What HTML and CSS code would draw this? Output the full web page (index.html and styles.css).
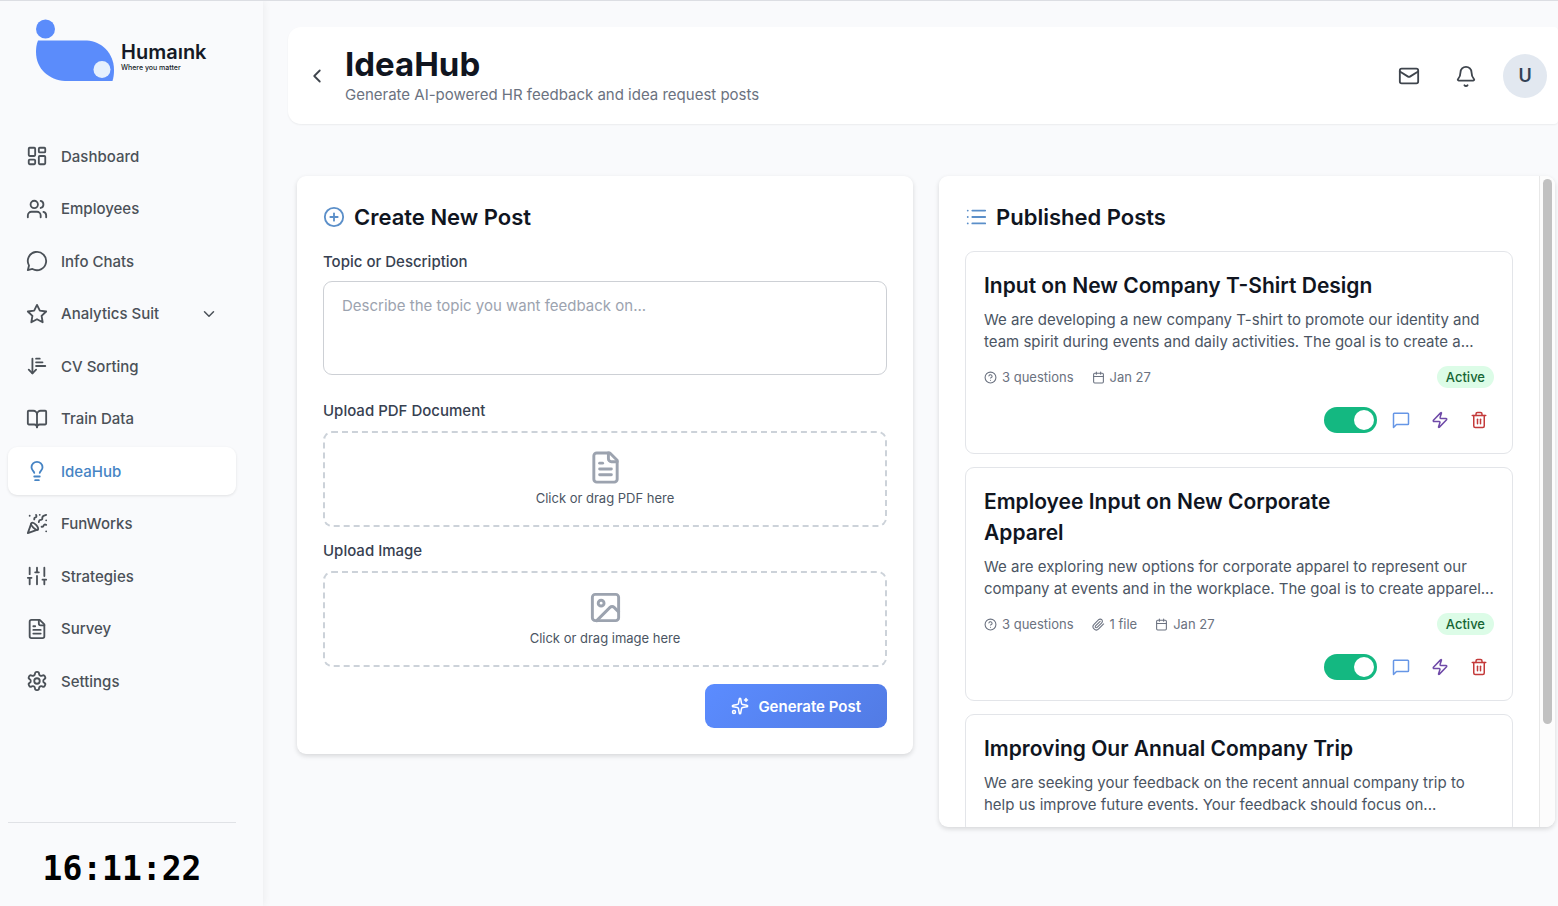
FILE: index.html
```html
<!DOCTYPE html>
<html lang="en">
<head>
<meta charset="UTF-8" />
<meta name="viewport" content="width=device-width, initial-scale=1" />
<title>Humaink - IdeaHub</title>
<link rel="stylesheet" href="styles.css">
</head>
<body>
  <aside class="sidebar">
    <a href="#" class="logo" aria-label="Humaink home">
      <svg class="logo-mark" viewBox="0 0 80 64">
        <circle cx="10.500" cy="10" r="9.500" fill="#5b8cfb"/>
        <path d="M3 21.500H52C66 22 79 34 79 51C79 55 78.500 59 77.500 62H30C14 61 1 50 1 33C1 29 1.500 25 3 21.500Z" fill="#5b8cfb"/>
        <circle cx="67" cy="50.500" r="8.500" fill="#e6f0fd"/>
      </svg>
      <span class="logo-text">
        <span class="logo-name">Humaınk</span>
        <span class="logo-tagline">Where you matter</span>
      </span>
    </a>

    <nav class="nav">
      <a href="#" class="nav-item">
        <svg class="icon" viewBox="0 0 24 24"><rect x="3" y="3" width="7" height="9" rx="1"/><rect x="14" y="3" width="7" height="5" rx="1"/><rect x="14" y="12" width="7" height="9" rx="1"/><rect x="3" y="16" width="7" height="5" rx="1"/></svg>
        <span>Dashboard</span>
      </a>
      <a href="#" class="nav-item">
        <svg class="icon" viewBox="0 0 24 24"><path d="M16 21v-2a4 4 0 0 0-4-4H6a4 4 0 0 0-4 4v2"/><circle cx="9" cy="7" r="4"/><path d="M22 21v-2a4 4 0 0 0-3-3.870"/><path d="M16 3.130a4 4 0 0 1 0 7.750"/></svg>
        <span>Employees</span>
      </a>
      <a href="#" class="nav-item">
        <svg class="icon" viewBox="0 0 24 24"><path d="M7 20.700A10 10 0 1 0 3.300 17L2 22Z"/></svg>
        <span>Info Chats</span>
      </a>
      <button type="button" class="nav-item">
        <svg class="icon" viewBox="0 0 24 24"><path d="M12 2l3.090 6.260L22 9.270l-5 4.870 1.180 6.880L12 17.770l-6.180 3.250L7 14.140 2 9.270l6.910-1.010z"/></svg>
        <span>Analytics Suit</span>
        <svg class="icon chevron" viewBox="0 0 24 24"><path d="m6 9 6 6 6-6"/></svg>
      </button>
      <a href="#" class="nav-item">
        <svg class="icon" viewBox="0 0 24 24"><path d="m3 16 4 4 4-4"/><path d="M7 20V4"/><path d="M11 4h4"/><path d="M11 8h7"/><path d="M11 12h10"/></svg>
        <span>CV Sorting</span>
      </a>
      <a href="#" class="nav-item">
        <svg class="icon" viewBox="0 0 24 24"><path d="M12 7v14"/><path d="M3 18a1 1 0 0 1-1-1V4a1 1 0 0 1 1-1h5a4 4 0 0 1 4 4 4 4 0 0 1 4-4h5a1 1 0 0 1 1 1v13a1 1 0 0 1-1 1h-6a3 3 0 0 0-3 3 3 3 0 0 0-3-3z"/></svg>
        <span>Train Data</span>
      </a>
      <a href="#" class="nav-item active" aria-current="page">
        <svg class="icon" viewBox="0 0 24 24"><path d="M15 14c.2-1 .7-1.700 1.500-2.500 1-.9 1.500-2.200 1.500-3.500A6 6 0 0 0 6 8c0 1 .2 2.200 1.500 3.500.7.700 1.300 1.500 1.500 2.500"/><path d="M9 18h6"/><path d="M10 22h4"/></svg>
        <span>IdeaHub</span>
      </a>
      <a href="#" class="nav-item">
        <svg class="icon" viewBox="0 0 24 24"><path d="M5.800 11.300 2 22l10.700-3.790"/><path d="M4 3h.01"/><path d="M22 8h.01"/><path d="M15 2h.01"/><path d="M22 20h.01"/><path d="m22 2-2.240.75a2.900 2.900 0 0 0-1.960 3.120c.1.860-.57 1.630-1.450 1.630h-.38c-.86 0-1.600.6-1.760 1.440L14 10"/><path d="m22 13-.82-.33c-.86-.34-1.820.2-1.980 1.110c-.11.700-.72 1.220-1.430 1.220H17"/><path d="m11 2 .33.820c.34.860-.2 1.820-1.110 1.980C9.520 4.900 9 5.520 9 6.230V7"/><path d="M11 13c1.930 1.930 2.830 4.170 2 5-.83.830-3.070-.07-5-2-1.930-1.930-2.830-4.170-2-5 .83-.83 3.070.07 5 2Z"/></svg>
        <span>FunWorks</span>
      </a>
      <a href="#" class="nav-item">
        <svg class="icon" viewBox="0 0 24 24"><path d="M4 21v-7M4 10V3M12 21v-9M12 8V3M20 21v-5M20 12V3M2 14h4M10 8h4M18 16h4"/></svg>
        <span>Strategies</span>
      </a>
      <a href="#" class="nav-item">
        <svg class="icon" viewBox="0 0 24 24"><path d="M15 2H6a2 2 0 0 0-2 2v16a2 2 0 0 0 2 2h12a2 2 0 0 0 2-2V7Z"/><path d="M14 2v4a2 2 0 0 0 2 2h4"/><path d="M10 9H8"/><path d="M16 13H8"/><path d="M16 17H8"/></svg>
        <span>Survey</span>
      </a>
      <a href="#" class="nav-item">
        <svg class="icon" viewBox="0 0 24 24"><path d="M12.220 2h-.44a2 2 0 0 0-2 2v.18a2 2 0 0 1-1 1.730l-.43.250a2 2 0 0 1-2 0l-.15-.08a2 2 0 0 0-2.730.730l-.22.380a2 2 0 0 0 .73 2.730l.15.100a2 2 0 0 1 1 1.720v.51a2 2 0 0 1-1 1.740l-.15.090a2 2 0 0 0-.73 2.730l.22.380a2 2 0 0 0 2.730.730l.15-.08a2 2 0 0 1 2 0l.43.250a2 2 0 0 1 1 1.730V20a2 2 0 0 0 2 2h.44a2 2 0 0 0 2-2v-.18a2 2 0 0 1 1-1.730l.43-.25a2 2 0 0 1 2 0l.15.080a2 2 0 0 0 2.730-.73l.22-.39a2 2 0 0 0-.73-2.730l-.15-.08a2 2 0 0 1-1-1.740v-.5a2 2 0 0 1 1-1.740l.15-.09a2 2 0 0 0 .73-2.730l-.22-.38a2 2 0 0 0-2.730-.73l-.15.080a2 2 0 0 1-2 0l-.43-.25a2 2 0 0 1-1-1.730V4a2 2 0 0 0-2-2z"/><circle cx="12" cy="12" r="3"/></svg>
        <span>Settings</span>
      </a>
    </nav>

    <div class="clock">16:11:22</div>
  </aside>

  <main class="main">
    <header class="topbar">
      <button type="button" class="icon-btn back" aria-label="Back">
        <svg class="icon" viewBox="0 0 24 24"><path d="m15 18-6-6 6-6"/></svg>
      </button>
      <div class="topbar-title">
        <h1>IdeaHub</h1>
        <p>Generate AI-powered HR feedback and idea request posts</p>
      </div>
      <div class="topbar-actions">
        <button type="button" class="icon-btn" aria-label="Messages">
          <svg class="icon" viewBox="0 0 24 24"><rect x="2" y="4" width="20" height="16" rx="2"/><path d="m22 7-8.970 5.700a1.940 1.940 0 0 1-2.060 0L2 7"/></svg>
        </button>
        <button type="button" class="icon-btn" aria-label="Notifications">
          <svg class="icon" viewBox="0 0 24 24"><path d="M10.300 22a2 2 0 0 0 3.400 0"/><path d="M3.300 15.300A1 1 0 0 0 4 17h16a1 1 0 0 0 .7-1.700C19.400 14 18 12.500 18 8A6 6 0 0 0 6 8c0 4.500-1.400 6-2.700 7.300"/></svg>
        </button>
        <button type="button" class="avatar" aria-label="Account">U</button>
      </div>
    </header>

    <div class="panels">
      <form class="panel create">
        <h2 class="panel-title">
          <svg class="icon" viewBox="0 0 24 24"><circle cx="12" cy="12" r="10"/><path d="M8 12h8"/><path d="M12 8v8"/></svg>
          Create New Post
        </h2>
        <label class="field-label" for="topic">Topic or Description</label>
        <textarea id="topic" class="topic" placeholder="Describe the topic you want feedback on..."></textarea>

        <label class="field-label" for="pdfFile">Upload PDF Document</label>
        <label class="dropzone">
          <input type="file" id="pdfFile" class="file-input" accept="application/pdf" />
          <svg class="icon" viewBox="0 0 24 24"><path d="M15 2H6a2 2 0 0 0-2 2v16a2 2 0 0 0 2 2h12a2 2 0 0 0 2-2V7Z"/><path d="M14 2v4a2 2 0 0 0 2 2h4"/><path d="M10 9H8"/><path d="M16 13H8"/><path d="M16 17H8"/></svg>
          <span>Click or drag PDF here</span>
        </label>

        <label class="field-label" for="imageFile">Upload Image</label>
        <label class="dropzone">
          <input type="file" id="imageFile" class="file-input" accept="image/*" />
          <svg class="icon" viewBox="0 0 24 24"><rect x="3" y="3" width="18" height="18" rx="2"/><circle cx="9" cy="9" r="2"/><path d="m21 15-3.090-3.090a2 2 0 0 0-2.820 0L6 21"/></svg>
          <span>Click or drag image here</span>
        </label>

        <button type="button" class="generate">
          <svg class="icon" viewBox="0 0 24 24"><path d="M11 2.800a1 1 0 0 1 2 0l1 5.600a2 2 0 0 0 1.600 1.600l5.600 1a1 1 0 0 1 0 2l-5.600 1a2 2 0 0 0-1.600 1.600l-1 5.600a1 1 0 0 1-2 0l-1-5.600A2 2 0 0 0 8.400 14l-5.600-1a1 1 0 0 1 0-2l5.600-1A2 2 0 0 0 10 8.400z"/><path d="M20 2v4"/><path d="M22 4h-4"/><circle cx="4" cy="20" r="2"/></svg>
          Generate Post
        </button>
      </form>

      <section class="panel published">
        <div class="posts">
          <h2 class="panel-title">
            <svg class="icon" viewBox="0 0 24 24"><path d="M8 5h14M8 12h14M8 19h14M3 5h.01M3 12h.01M3 19h.01"/></svg>
            Published Posts
          </h2>

          <article class="post">
            <h3>Input on New Company T-Shirt Design</h3>
            <p class="post-text">We are developing a new company T-shirt to promote our identity and team spirit during events and daily activities. The goal is to create a...</p>
            <div class="meta">
              <span class="meta-item"><svg class="icon" viewBox="0 0 24 24"><circle cx="12" cy="12" r="10"/><path d="M9.090 9a3 3 0 0 1 5.830 1c0 2-3 3-3 3"/><path d="M12 17h.01"/></svg>3 questions</span>
              <span class="meta-item"><svg class="icon" viewBox="0 0 24 24"><path d="M8 2v4"/><path d="M16 2v4"/><rect x="3" y="4" width="18" height="18" rx="2"/><path d="M3 10h18"/></svg>Jan 27</span>
              <span class="badge">Active</span>
            </div>
            <div class="actions">
              <input type="checkbox" role="switch" class="toggle" aria-label="Post active" checked />
              <button type="button" class="action comment" aria-label="Responses"><svg class="icon" viewBox="0 0 24 24"><path d="M21 3H3a1 1 0 0 0-1 1v18l4-4h15a1 1 0 0 0 1-1V4a1 1 0 0 0-1-1z"/></svg></button>
              <button type="button" class="action boost" aria-label="Analyze"><svg class="icon" viewBox="0 0 24 24"><path d="M4 14a1 1 0 0 1-.78-1.630l9.900-10.200a.5.500 0 0 1 .86.460l-1.920 6.020A1 1 0 0 0 13 10h7a1 1 0 0 1 .78 1.630l-9.900 10.200a.5.500 0 0 1-.86-.46l1.920-6.020A1 1 0 0 0 11 14z"/></svg></button>
              <button type="button" class="action delete" aria-label="Delete"><svg class="icon" viewBox="0 0 24 24"><path d="M3 6h18"/><path d="M19 6v14a2 2 0 0 1-2 2H7a2 2 0 0 1-2-2V6"/><path d="M8 6V4a2 2 0 0 1 2-2h4a2 2 0 0 1 2 2v2"/><path d="M10 11v6"/><path d="M14 11v6"/></svg></button>
            </div>
          </article>

          <article class="post">
            <h3>Employee Input on New Corporate Apparel</h3>
            <p class="post-text">We are exploring new options for corporate apparel to represent our company at events and in the workplace. The goal is to create apparel...</p>
            <div class="meta">
              <span class="meta-item"><svg class="icon" viewBox="0 0 24 24"><circle cx="12" cy="12" r="10"/><path d="M9.090 9a3 3 0 0 1 5.830 1c0 2-3 3-3 3"/><path d="M12 17h.01"/></svg>3 questions</span>
              <span class="meta-item"><svg class="icon" viewBox="0 0 24 24"><path d="m21.440 11.050-9.190 9.190a6 6 0 0 1-8.490-8.490l8.570-8.570A4 4 0 1 1 18 8.840l-8.590 8.570a2 2 0 0 1-2.830-2.830l8.490-8.480"/></svg>1 file</span>
              <span class="meta-item"><svg class="icon" viewBox="0 0 24 24"><path d="M8 2v4"/><path d="M16 2v4"/><rect x="3" y="4" width="18" height="18" rx="2"/><path d="M3 10h18"/></svg>Jan 27</span>
              <span class="badge">Active</span>
            </div>
            <div class="actions">
              <input type="checkbox" role="switch" class="toggle" aria-label="Post active" checked />
              <button type="button" class="action comment" aria-label="Responses"><svg class="icon" viewBox="0 0 24 24"><path d="M21 3H3a1 1 0 0 0-1 1v18l4-4h15a1 1 0 0 0 1-1V4a1 1 0 0 0-1-1z"/></svg></button>
              <button type="button" class="action boost" aria-label="Analyze"><svg class="icon" viewBox="0 0 24 24"><path d="M4 14a1 1 0 0 1-.78-1.630l9.900-10.200a.5.500 0 0 1 .86.460l-1.920 6.020A1 1 0 0 0 13 10h7a1 1 0 0 1 .78 1.630l-9.900 10.200a.5.500 0 0 1-.86-.46l1.920-6.020A1 1 0 0 0 11 14z"/></svg></button>
              <button type="button" class="action delete" aria-label="Delete"><svg class="icon" viewBox="0 0 24 24"><path d="M3 6h18"/><path d="M19 6v14a2 2 0 0 1-2 2H7a2 2 0 0 1-2-2V6"/><path d="M8 6V4a2 2 0 0 1 2-2h4a2 2 0 0 1 2 2v2"/><path d="M10 11v6"/><path d="M14 11v6"/></svg></button>
            </div>
          </article>

          <article class="post">
            <h3>Improving Our Annual Company Trip</h3>
            <p class="post-text">We are seeking your feedback on the recent annual company trip to help us improve future events. Your feedback should focus on...</p>
          </article>
        </div>
        <div class="scroll-track" aria-hidden="true"><div class="scroll-thumb"></div></div>
      </section>
    </div>
  </main>
</body>
</html>
```
FILE: styles.css
```css
* {
  box-sizing: border-box;
}
body {
  margin: 0;
  background-color: #f9fafc;
  font-family: Inter, "Liberation Sans", sans-serif;
  color: #10151f;
  display: flex;
  height: 100vh;
  overflow: hidden;
  border-top: 1px solid #dcdee3;
}
h1, h2, h3, p {
  margin: 0;
}
button {
  font-family: inherit;
  border: none;
  background: none;
  padding: 0;
  cursor: pointer;
}
.icon {
  width: 22px;
  height: 22px;
  flex: none;
  fill: none;
  stroke: currentColor;
  stroke-width: 2;
  stroke-linecap: round;
  stroke-linejoin: round;
}

/* sidebar */
.sidebar {
  width: 263px;
  flex: none;
  display: flex;
  flex-direction: column;
  padding: 18px 27px 0 8px;
  box-shadow: 1px 0 8px rgba(0, 0, 0, 0.06);
}
.logo {
  display: flex;
  align-items: flex-start;
  gap: 6px;
  padding-left: 27px;
  height: 113px;
  color: #151a26;
  text-decoration: none;
}
.logo-mark {
  width: 80px;
  height: 64px;
}
.logo-text {
  display: flex;
  flex-direction: column;
  padding-top: 21px;
}
.logo-name {
  font-size: 20px;
  line-height: 24px;
  font-weight: 600;
}
.logo-tagline {
  font-size: 7px;
  line-height: 8px;
  font-weight: 500;
}
.nav {
  height: 573px;
  display: flex;
  flex-direction: column;
  justify-content: space-between;
}
.nav-item {
  display: flex;
  align-items: center;
  gap: 13px;
  height: 48px;
  padding: 0 18px;
  border-radius: 9px;
  font-size: 15px;
  font-weight: 500;
  color: #4b5158;
  text-decoration: none;
}
.nav-item.active {
  background: #fff;
  color: #4684c4;
  box-shadow: 0 1px 3px rgba(0, 0, 0, 0.1);
}
.chevron {
  width: 18px;
  height: 18px;
  margin-left: auto;
}
.clock {
  margin-top: auto;
  border-top: 1px solid #e0e2e6;
  height: 84px;
  padding-top: 26px;
  text-align: center;
  font-family: "DejaVu Sans Mono", monospace;
  font-size: 33px;
  line-height: 40px;
  font-weight: bold;
  color: #000;
}

/* header */
.main {
  flex: 1;
  min-width: 0;
  padding: 26px 0 0 25px;
}
.topbar {
  display: flex;
  align-items: center;
  height: 97px;
  padding: 0 11px 0 18px;
  background: #fff;
  border-radius: 13px 4px 4px 13px;
  box-shadow: 0 1px 2px rgba(0, 0, 0, 0.06);
}
.icon-btn {
  display: flex;
  color: #3f454d;
}
.topbar-title {
  margin-left: 17px;
}
.topbar-title h1 {
  font-size: 33px;
  line-height: 39px;
  font-weight: 700;
}
.topbar-title p {
  font-size: 15px;
  line-height: 22px;
  color: #6b7280;
}
.topbar-actions {
  display: flex;
  align-items: center;
  gap: 35px;
  margin-left: auto;
}
.avatar {
  width: 44px;
  height: 44px;
  margin-left: -9px;
  border-radius: 50%;
  background: #e2e8f0;
  color: #334155;
  font-size: 18px;
  font-weight: 600;
}

/* panels */
.panels {
  display: grid;
  grid-template-columns: 1fr 1fr;
  align-items: start;
  gap: 26px;
  padding: 52px 3px 0 9px;
}
.panel {
  background: #fff;
  border-radius: 9px;
  box-shadow: 0 2px 5px rgba(0, 0, 0, 0.14);
}
.panel-title {
  display: flex;
  align-items: center;
  gap: 9px;
  font-size: 22px;
  line-height: 30px;
  font-weight: 600;
}
.panel-title .icon {
  color: #5b8fc9;
}
.create {
  display: flex;
  flex-direction: column;
  padding: 26px;
}
.field-label {
  margin-top: 19px;
  font-size: 15px;
  line-height: 22px;
  font-weight: 500;
  color: #374151;
}
.topic {
  width: 100%;
  height: 94px;
  margin: 8px 0 6px;
  padding: 13px 18px;
  border: 1px solid #cdd0d5;
  border-radius: 9px;
  font-family: inherit;
  font-size: 15px;
  line-height: 22px;
  resize: none;
}
.topic::placeholder {
  color: #9ca3af;
}
.dropzone {
  display: flex;
  flex-direction: column;
  align-items: center;
  gap: 3px;
  margin-top: 9px;
  padding: 17px 0;
  border: 2px dashed #ccd2d9;
  border-radius: 9px;
  font-size: 13px;
  line-height: 20px;
  color: #4b5563;
  cursor: pointer;
}
.dropzone + .field-label {
  margin-top: 13px;
}
.dropzone .icon {
  width: 35px;
  height: 35px;
  color: #9ca3af;
}
.file-input {
  position: absolute;
  width: 1px;
  height: 1px;
  opacity: 0;
}
.generate {
  display: flex;
  align-items: center;
  align-self: flex-end;
  gap: 9px;
  height: 44px;
  margin-top: 17px;
  padding: 0 26px;
  border-radius: 9px;
  background: linear-gradient(135deg, #5b8cff, #527be4);
  color: #fff;
  font-size: 15px;
  font-weight: 600;
}
.generate .icon {
  width: 18px;
  height: 18px;
}

/* published posts */
.published {
  display: flex;
  height: 651px;
  overflow: hidden;
}
.posts {
  flex: 1;
  min-width: 0;
  display: flex;
  flex-direction: column;
  gap: 13px;
  padding: 26px 26px 0;
  overflow-y: auto;
  scrollbar-width: none;
}
.post {
  flex: none;
  padding: 18px;
  border: 1px solid #e3e5e9;
  border-radius: 9px;
}
.panel-title + .post {
  margin-top: 6px;
}
.post h3 {
  max-width: 80%;
  font-size: 21px;
  line-height: 31px;
  font-weight: 600;
}
.post-text {
  margin-top: 8px;
  font-size: 15px;
  line-height: 22px;
  color: #4b5563;
}
.meta {
  display: flex;
  align-items: center;
  gap: 18px;
  margin-top: 13px;
  font-size: 13px;
  line-height: 22px;
  color: #6b7280;
}
.meta-item {
  display: flex;
  align-items: center;
  gap: 5px;
}
.meta .icon {
  width: 13px;
  height: 13px;
}
.badge {
  margin-left: auto;
  padding: 0 9px;
  border-radius: 11px;
  background: #dcfce7;
  color: #166534;
  font-weight: 500;
}
.actions {
  display: flex;
  align-items: center;
  justify-content: flex-end;
  gap: 9px;
  height: 31px;
  margin-top: 16px;
}
.toggle {
  appearance: none;
  display: flex;
  width: 53px;
  height: 26px;
  margin: 0;
  padding: 3px;
  border-radius: 13px;
  background: #cbd5e1;
  cursor: pointer;
}
.toggle:checked {
  justify-content: flex-end;
  background: #14b881;
}
.toggle::before {
  content: "";
  width: 20px;
  height: 20px;
  border-radius: 50%;
  background: #fff;
}
.action {
  display: flex;
  padding: 6px;
}
.action .icon {
  width: 18px;
  height: 18px;
}
.comment {
  color: #6696e6;
}
.boost {
  color: #6f4aa8;
}
.delete {
  color: #c43a3a;
}
.scroll-track {
  width: 16px;
  padding: 3px 3px 0;
  border-left: 1px solid #e8e8e8;
  background: #fcfcfc;
}
.scroll-thumb {
  width: 9px;
  height: 545px;
  border-radius: 5px;
  background: #c1c1c1;
}
```
